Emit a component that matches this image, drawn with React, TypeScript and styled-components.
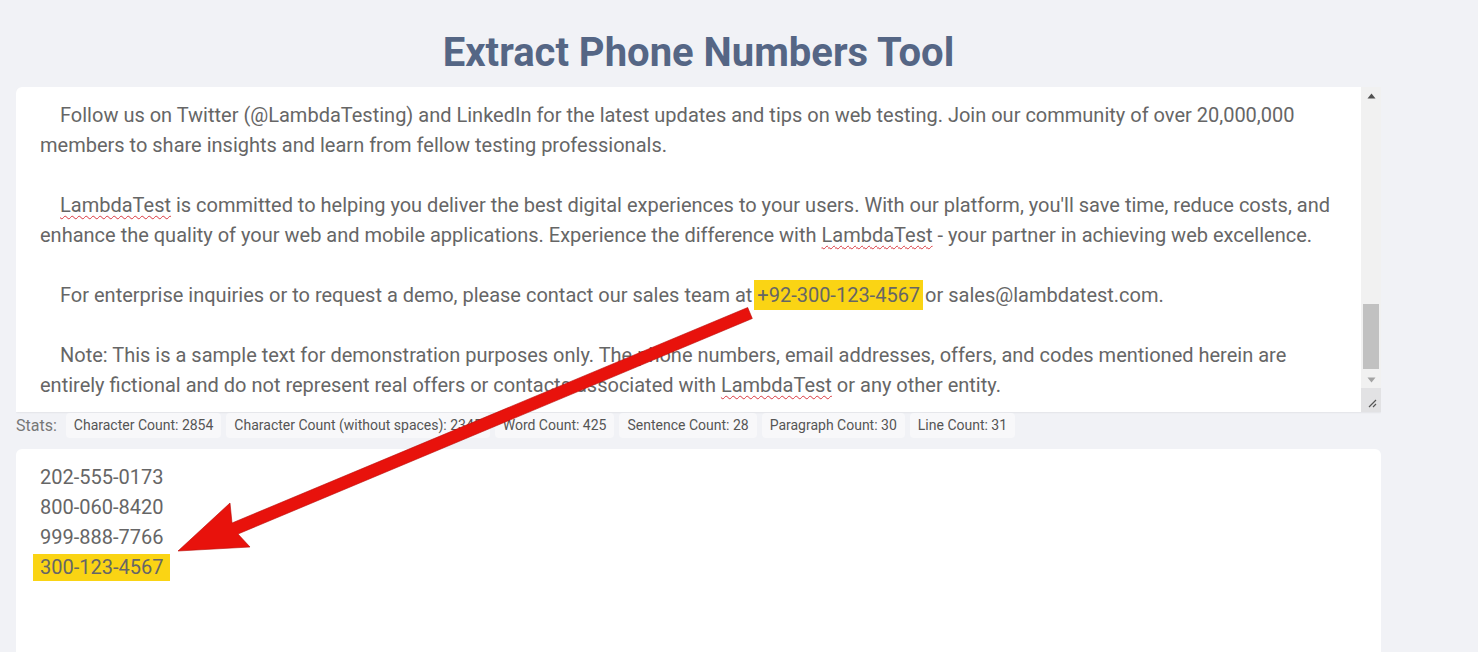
import React from 'react';
import styled, { createGlobalStyle } from 'styled-components';

const GlobalStyle = createGlobalStyle`
  body {
    margin: 0;
    background: #f1f2f6;
    font-family: Roboto, "Liberation Sans", sans-serif;
  }
`;

type Line = { text: React.ReactNode; indent?: boolean };

const Squiggle = styled.span`
  text-decoration: underline wavy #d9363e;
  text-decoration-thickness: 1px;
  text-underline-offset: 3px;
`;

const InlineMark = styled.span`
  display: inline-block;
  background: #fad414;
  padding: 0 3px;
  margin: 0 -3px;
  line-height: 30px;
`;

const inputLines: (Line | null)[] = [
  {
    indent: true,
    text: 'Follow us on Twitter (@LambdaTesting) and LinkedIn for the latest updates and tips on web testing. Join our community of over 20,000,000',
  },
  { text: 'members to share insights and learn from fellow testing professionals.' },
  null,
  {
    indent: true,
    text: (
      <>
        <Squiggle>LambdaTest</Squiggle> is committed to helping you deliver the best digital experiences to your users. With our platform, you'll save time, reduce costs, and
      </>
    ),
  },
  {
    text: (
      <>
        enhance the quality of your web and mobile applications. Experience the difference with <Squiggle>LambdaTest</Squiggle> - your partner in achieving web excellence.
      </>
    ),
  },
  null,
  {
    indent: true,
    text: (
      <>
        For enterprise inquiries or to request a demo, please contact our sales team at <InlineMark>+92-300-123-4567</InlineMark> or sales@lambdatest.com.
      </>
    ),
  },
  null,
  {
    indent: true,
    text: 'Note: This is a sample text for demonstration purposes only. The phone numbers, email addresses, offers, and codes mentioned herein are',
  },
  {
    text: (
      <>
        entirely fictional and do not represent real offers or contacts associated with <Squiggle>LambdaTest</Squiggle> or any other entity.
      </>
    ),
  },
];

const stats = [
  'Character Count: 2854',
  'Character Count (without spaces): 2345',
  'Word Count: 425',
  'Sentence Count: 28',
  'Paragraph Count: 30',
  'Line Count: 31',
];

const numbers = ['202-555-0173', '800-060-8420', '999-888-7766'];

const App: React.FC = () => {
  return (
    <>
      <GlobalStyle />
      <Page>
        <Title>Extract Phone Numbers Tool</Title>
        <Editor>
          <InputText>
            {inputLines.map((line, i) =>
              line ? (
                <TextLine key={i} $indent={line.indent}>
                  {line.text}
                </TextLine>
              ) : (
                <TextLine key={i}>&nbsp;</TextLine>
              )
            )}
          </InputText>
          <Scrollbar>
            <ArrowBtn>
              <svg width="9" height="6" viewBox="0 0 9 6">
                <path d="M0.5 5.5 L4.5 0.5 L8.5 5.5 Z" fill="#505050" />
              </svg>
            </ArrowBtn>
            <Track>
              <Thumb />
            </Track>
            <ArrowBtn>
              <svg width="9" height="6" viewBox="0 0 9 6">
                <path d="M0.5 0.5 L4.5 5.5 L8.5 0.5 Z" fill="#a3a3a3" />
              </svg>
            </ArrowBtn>
            <Resize>
              <svg width="10" height="10" viewBox="0 0 10 10">
                <path d="M2 9 L9 2 M6 9 L9 6" stroke="#555" strokeWidth="1.2" />
              </svg>
            </Resize>
          </Scrollbar>
        </Editor>
        <StatsRow>
          <StatsLabel>Stats:</StatsLabel>
          {stats.map((s) => (
            <Chip key={s}>{s}</Chip>
          ))}
        </StatsRow>
        <Output>
          {numbers.map((n) => (
            <TextLine key={n}>{n}</TextLine>
          ))}
          <TextLine>
            <ResultMark>300-123-4567</ResultMark>
          </TextLine>
        </Output>
        <Annotation width="1478" height="652" viewBox="0 0 1478 652">
          <polygon
            points="747.7,307.5 752.3,318.5 238,534 250,547 178,551 230,503 232,523"
            fill="#e8120c"
            stroke="#b80a06"
            strokeWidth="0.6"
            strokeLinejoin="round"
          />
        </Annotation>
      </Page>
    </>
  );
};

const Page = styled.div`
  width: 1365px;
  margin-left: 16px;
  padding-top: 30px;
  height: 622px;
  overflow: hidden;
`;

const Title = styled.h1`
  margin: 0 0 11px;
  text-align: center;
  font-size: 40px;
  line-height: 46px;
  font-weight: 700;
  color: #556685;
`;

const Editor = styled.div`
  display: flex;
  height: 325px;
  background: #fff;
  border-radius: 6px 0 0 0;
  box-shadow: 0 1px 2px rgba(0, 0, 0, 0.06);
`;

const InputText = styled.div`
  flex: 1;
  padding: 13px 20px 0 24px;
  overflow: hidden;
  color: #666;
  font-size: 20px;
`;

const TextLine = styled.div<{ $indent?: boolean }>`
  height: 30px;
  line-height: 30px;
  white-space: pre;
  font-size: 20px;
  color: #666;
  padding-left: ${(p) => (p.$indent ? '20px' : '0')};
`;

const Scrollbar = styled.div`
  width: 20px;
  display: flex;
  flex-direction: column;
  background: #f1f1f1;
`;

const ArrowBtn = styled.div`
  height: 17px;
  display: flex;
  align-items: center;
  justify-content: center;
`;

const Track = styled.div`
  flex: 1;
  display: flex;
  flex-direction: column;
  justify-content: flex-end;
  padding: 0 2px 0;
`;

const Thumb = styled.div`
  height: 65px;
  margin-bottom: 2px;
  background: #c1c1c1;
`;

const Resize = styled.div`
  height: 20px;
  display: flex;
  align-items: flex-end;
  justify-content: flex-end;
  padding: 0 4px 4px 0;
  background: #e2e2e4;
`;

const StatsRow = styled.div`
  display: flex;
  align-items: center;
  gap: 5px;
  padding: 1px 0 11px;
`;

const StatsLabel = styled.span`
  font-size: 16px;
  color: #777;
  margin-right: 4px;
`;

const Chip = styled.span`
  height: 25px;
  line-height: 25px;
  padding: 0 8px;
  border-radius: 4px;
  background: #f8f8fa;
  font-size: 14px;
  color: #555;
`;

const Output = styled.div`
  background: #fff;
  border-radius: 6px 6px 0 0;
  padding: 13px 24px;
  height: 220px;
`;

const ResultMark = styled.span`
  display: inline-block;
  background: #fad414;
  padding: 0 7px;
  margin-left: -7px;
  line-height: 27px;
`;

const Annotation = styled.svg`
  position: absolute;
  left: 0;
  top: 0;
  pointer-events: none;
`;

export default App;
